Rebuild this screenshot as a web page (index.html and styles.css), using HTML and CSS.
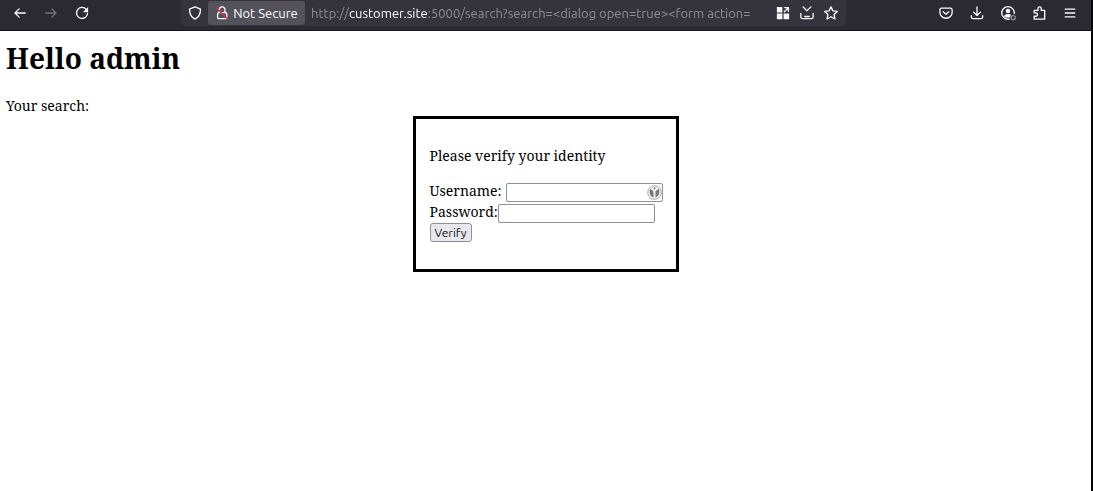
FILE: index.html
```
<!DOCTYPE html>
<html lang="en">

<head>
    <meta charset="utf-8">
    <meta name="viewport" content="width=device-width, initial-scale=1.0">
    <title>customer.site</title>
    <link rel="stylesheet" href="styles.css">
</head>

<body>
    <header class="toolbar">
        <nav class="history">
            <button class="tool" aria-label="Back">
                <svg viewBox="0 0 16 16"><path d="M14 8H2.500M7 3.300L2.300 8L7 12.700"/></svg>
            </button>
            <button class="tool" aria-label="Forward" disabled>
                <svg viewBox="0 0 16 16"><path d="M2 8H13.500M9 3.300L13.700 8L9 12.700"/></svg>
            </button>
            <button class="tool" aria-label="Reload">
                <svg viewBox="0 0 16 16"><path d="M12.800 3.800A6.300 6.300 0 1 0 14.300 8.500"/><path class="solid" d="M15 1V7H9Z"/></svg>
            </button>
        </nav>
        <div class="address">
            <button class="shield" aria-label="Tracking protection">
                <svg viewBox="0 0 16 16"><path d="M8 1L14.300 3.500C14.300 9 12.300 13 8 15C3.700 13 1.700 9 1.700 3.500Z"/></svg>
            </button>
            <button class="security">
                <svg viewBox="0 0 16 16"><path d="M5 7.500V4.200A3.200 3.200 0 0 1 11.400 4.200V7.500M7 7.500H12Q13.500 7.500 13.500 9V13Q13.500 14.500 12 14.500H4.500Q3 14.500 3 13V9Q3 7.500 4.500 7.500"/><path class="strike" d="M1.500 2L14.500 14.500"/></svg>
                <span>Not Secure</span>
            </button>
            <div class="url">http://<b>customer.site</b>:5000/search?search=&lt;dialog open=true&gt;&lt;form action=</div>
            <button class="action" aria-label="Extensions shortcut">
                <svg viewBox="0 0 16 16"><path class="solid" d="M1 1H7.300V7.300H1ZM1 8.700H7.300V15H1ZM8.700 8.700H15V15H8.700Z"/><path d="M9.500 6.500L13.800 2.200M10 1.800H14.200V6"/></svg>
            </button>
            <button class="action" aria-label="Save page">
                <svg viewBox="0 0 16 16"><path d="M3.500 1L8 5.500L12.500 1M1 8.500V12.500Q1 14.500 3 14.500H13Q15 14.500 15 12.500V8.500M5.500 12H10.500"/></svg>
            </button>
            <button class="action" aria-label="Bookmark">
                <svg viewBox="0 0 16 16"><path d="M8 1L10.200 5.600L15.200 6.200L11.500 9.700L12.500 14.800L8 12.300L3.500 14.800L4.500 9.700L0.800 6.200L5.800 5.600Z"/></svg>
            </button>
        </div>
        <div class="tools">
            <button class="tool" aria-label="Pocket">
                <svg viewBox="0 0 16 16"><path d="M3 2.500H13Q15 2.500 15 4.500V7.500A7 6.500 0 0 1 1 7.500V4.500Q1 2.500 3 2.500ZM4.800 6.500L8 9.500L11.200 6.500"/></svg>
            </button>
            <button class="tool" aria-label="Downloads">
                <svg viewBox="0 0 16 16"><path d="M8 1V10.500M4 7L8 10.800L12 7M1.500 11V12.500Q1.500 14.500 3.500 14.500H12.500Q14.500 14.500 14.500 12.500V11"/></svg>
            </button>
            <button class="tool" aria-label="Account">
                <svg viewBox="0 0 16 16"><path d="M9.500 15A7.200 7.200 0 1 1 15.200 8.500"/><circle class="solid" cx="8" cy="5.800" r="2.600"/><path class="solid" d="M3.500 12Q3.800 9 8 9T11 10.500L10.300 13H5Z"/><circle class="dot" cx="14" cy="13.300" r="2.300"/></svg>
            </button>
            <button class="tool" aria-label="Extensions">
                <svg viewBox="0 0 16 16"><path d="M2.500 15V11.700H4.500A1.900 1.900 0 0 0 4.500 7.900H2.500V5H6.800V3A1.900 1.900 0 0 1 10.600 3V5H14.500V15Z"/></svg>
            </button>
            <button class="tool" aria-label="Menu">
                <svg viewBox="0 0 16 16"><path d="M2.500 3.500H13.500M2.500 8H13.500M2.500 12.500H13.500"/></svg>
            </button>
        </div>
    </header>

    <main>
        <h1>Hello admin</h1>
        <p class="result">Your search:</p>
        <dialog open>
            <form>
                <p class="prompt">Please verify your identity</p>
                <div class="row spaced">
                    <label for="username">Username:</label>
                    <div class="field">
                        <input type="text" id="username">
                        <svg class="key" viewBox="0 0 16 16"><circle class="ring" cx="8" cy="8" r="7.300"/><path d="M6.900 13.200C3 12 1.800 7.500 3.800 3.800C4.500 6 6.900 5.500 6.900 8ZM9.100 13.200C13 12 14.200 7.500 12.200 3.800C11.500 6 9.100 5.500 9.100 8Z"/><circle cx="8" cy="3.500" r="1"/></svg>
                    </div>
                </div>
                <div class="row">
                    <label for="password">Password:</label>
                    <input type="password" id="password">
                </div>
                <button class="verify" type="button">Verify</button>
            </form>
        </dialog>
    </main>
</body>

</html>
```
FILE: styles.css
```
* {
    box-sizing: border-box;
}

body {
    margin: 0;
    min-height: 100vh;
    border-right: 2px solid #050507;
    background: #fff;
    color: #000;
    font-family: "Noto Serif", "DejaVu Serif", serif;
    font-size: 14px;
    line-height: 20px;
}

/* browser bar */
.toolbar {
    display: flex;
    height: 31px;
    padding-bottom: 4px;
    border-bottom: 1px solid #15131c;
    background: #2b2a33;
    color: #fbfbfe;
    font-family: Ubuntu, "Noto Sans", sans-serif;
    font-size: 13px;
}

.toolbar button {
    display: flex;
    align-items: center;
    justify-content: center;
    padding: 0;
    border: 0;
    background: none;
    color: inherit;
    font: inherit;
}

.toolbar button:disabled {
    color: #74737b;
}

.toolbar svg {
    width: 14px;
    height: 14px;
    flex: none;
    fill: none;
    stroke: currentColor;
    stroke-width: 1.5;
    stroke-linejoin: round;
    stroke-linecap: round;
    overflow: visible;
}

.toolbar .solid {
    fill: currentColor;
    stroke: none;
}

.toolbar .strike {
    stroke: #e22850;
}

.toolbar .dot {
    fill: #2b2a33;
    stroke: #8f8e96;
}

.tool {
    width: 31px;
}

.history {
    display: flex;
    flex: 0 0 181px;
    padding-left: 4px;
}

.address {
    display: flex;
    flex: 1;
    min-width: 0;
    padding-right: 3px;
    border-radius: 0 0 4px 4px;
    background: #35343d;
}

.shield {
    width: 27px;
}

.toolbar .security {
    flex: none;
    gap: 4px;
    width: 97px;
    margin: 1px 0;
    border-radius: 3px;
    background: #53525a;
}

.url {
    flex: 1;
    min-width: 0;
    margin-left: 6px;
    overflow: hidden;
    color: #8f8e96;
    line-height: 27px;
    white-space: nowrap;
    mask-image: linear-gradient(to left, transparent, #000 24px);
}

.url b {
    color: #fbfbfe;
    font-weight: normal;
}

.action {
    width: 24px;
    flex: none;
}

.tools {
    display: flex;
    flex: 0 0 245px;
    justify-content: flex-end;
    padding-right: 6px;
}

/* page */
main {
    padding: 11px 6px;
}

h1 {
    margin: 0;
    font-size: 28px;
    line-height: 32px;
}

.result {
    margin: 22px 0 0;
}

dialog {
    position: static;
    width: 266px;
    margin: 0 auto;
    padding: 27px 14px;
    border: 3px solid #000;
    background: #fff;
    color: #000;
}

.prompt {
    margin: 0 0 17px;
}

.row {
    display: flex;
    height: 19px;
    line-height: 16px;
}

.spaced {
    gap: 4px;
    margin-bottom: 2px;
}

.field {
    position: relative;
    display: flex;
}

input {
    width: 157px;
    height: 19px;
    padding: 1px 2px;
    border: 1px solid #8f8f9d;
    border-radius: 2px;
    background: #fff;
}

.key {
    position: absolute;
    top: 2px;
    right: 1px;
    width: 15px;
    height: 15px;
    fill: #77777a;
}

.key .ring {
    fill: #ededed;
    stroke: #a9a9ac;
}

.verify {
    display: block;
    width: 42px;
    height: 19px;
    padding: 0;
    border: 1px solid #8f8f9d;
    border-radius: 3px;
    background: #e9e9ed;
    color: #111;
    font-family: Ubuntu, "Noto Sans", sans-serif;
    font-size: 12px;
    line-height: 16px;
}
```
